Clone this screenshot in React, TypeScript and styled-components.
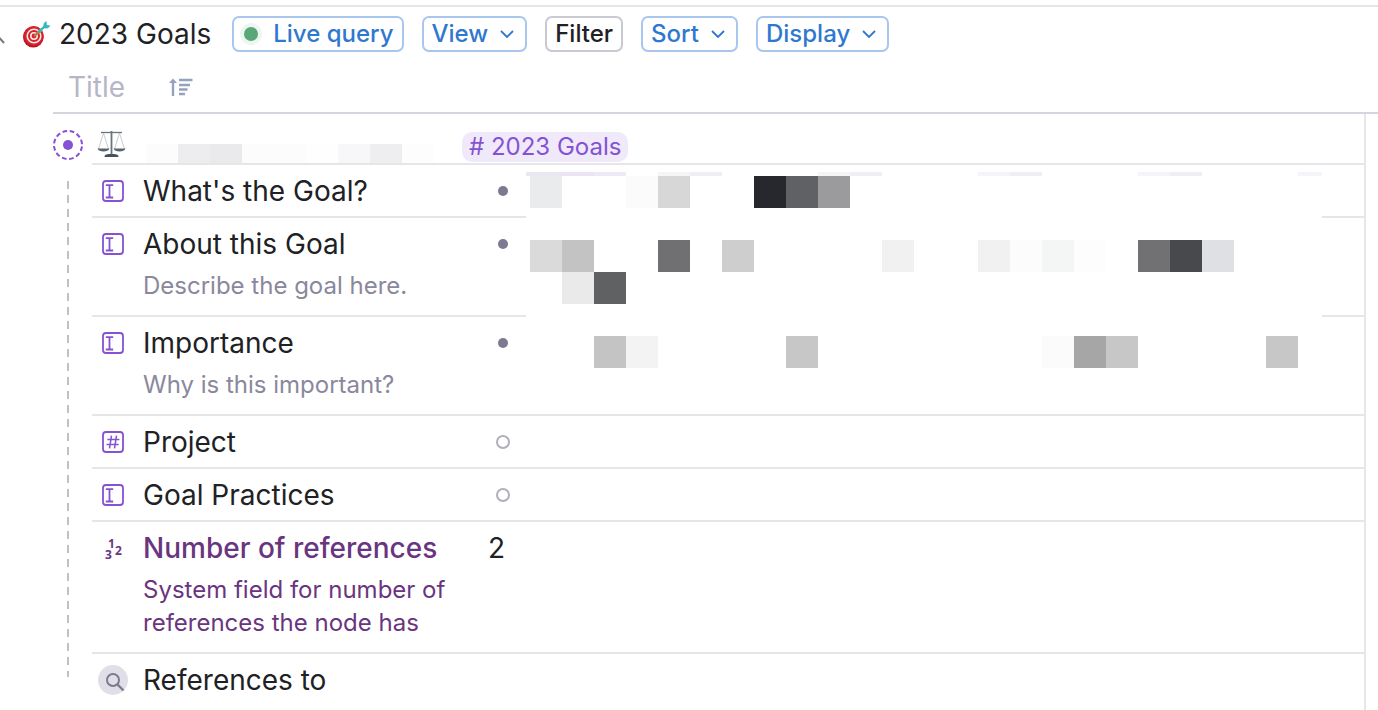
import React from "react";
import styled, { createGlobalStyle, css } from "styled-components";

const GlobalStyle = createGlobalStyle`
  * { box-sizing: border-box; }
  html, body, #root { height: 100%; }
  body {
    margin: 0;
    background: #fff;
    color: #202124;
    font-family: Inter, "Liberation Sans", sans-serif;
    overflow: hidden;
  }
`;

const Page = styled.main`
  min-height: 100%;
  display: flex;
  flex-direction: column;
  padding-top: 5px;
`;

const Toolbar = styled.header`
  display: flex;
  align-items: center;
  gap: 18px;
  height: 55px;
  border-top: 2px solid #e5e5e7;
`;

const Heading = styled.div`
  display: flex;
  align-items: center;
  margin-right: 3px;
`;

const BackEdge = styled.svg`
  width: 6px;
  height: 12px;
  margin: 12px 16px 0 0;
`;

const Target = styled.svg`
  width: 30px;
  height: 28px;
`;

const PageTitle = styled.h1`
  margin: 0 0 0 7px;
  font-size: 28px;
  line-height: 36px;
  font-weight: 400;
  white-space: nowrap;
`;

const ToolButton = styled.button<{ $plain?: boolean }>`
  display: flex;
  align-items: center;
  gap: 12px;
  height: 36px;
  padding: 0 8px;
  border: 2px solid ${(p) => (p.$plain ? "#c9c9d1" : "#a9c7ee")};
  border-radius: 7px;
  background: #fff;
  color: ${(p) => (p.$plain ? "#202124" : "#2f78cf")};
  font: 500 24px/32px Inter, "Liberation Sans", sans-serif;
  white-space: nowrap;
`;

const LiveDot = styled.span`
  width: 14px;
  height: 14px;
  margin: 0 3px 0 2px;
  border-radius: 50%;
  background: #5ba778;
  box-shadow: 0 0 0 4px #edf6f0;
`;

const ChevronIcon = styled.svg`
  width: 14px;
  height: 8px;
  margin-right: 3px;
`;

const ColumnHeader = styled.div`
  display: flex;
  align-items: center;
  gap: 44px;
  height: 54px;
  margin-left: 53px;
  padding: 2px 0 0 15px;
  border-bottom: 2px solid #d6d5de;
  color: #b7b6c6;
  font-size: 28px;
  line-height: 36px;
`;

const SortIcon = styled.svg`
  width: 24px;
  height: 20px;
`;

const Results = styled.section`
  flex: 1;
  display: flex;
  margin: 0 12px 0 53px;
  border-right: 2px solid #e7e7ea;
`;

const Gutter = styled.div`
  display: flex;
  flex-direction: column;
  align-items: center;
  gap: 21px;
  width: 30px;
  margin-right: 9px;
  padding-top: 16px;
`;

const NodeBullet = styled.svg`
  width: 30px;
  height: 30px;
`;

const Thread = styled.div`
  width: 2px;
  height: 496px;
  background: repeating-linear-gradient(#bfbfc4 0 8px, transparent 8px 14px);
`;

const Node = styled.article`
  position: relative;
  flex: 1;
  min-width: 0;
`;

const line = css`
  border-bottom: 2px solid #e6e6e8;
`;

const NodeHead = styled.div`
  display: grid;
  grid-template-columns: 54px 316px 1fr;
  align-items: end;
  height: 51px;
  ${line}
`;

const Scales = styled.svg`
  width: 30px;
  height: 30px;
  margin: 0 0 4px 5px;
`;

const Strip = styled.div`
  display: flex;
`;

const Tag = styled.a`
  justify-self: start;
  margin-bottom: 1px;
  padding: 0 7px;
  border-radius: 10px;
  background: #efe9fa;
  color: #8552d3;
  font-size: 24px;
  line-height: 30px;
  text-decoration: none;
  white-space: nowrap;
`;

const Field = styled.div<{ $last?: boolean }>`
  display: grid;
  grid-template-columns: 51px 338px 1fr;
  padding: 6px 0 5px;
  ${(p) => !p.$last && line}
`;

const IconCell = styled.div`
  display: flex;
  align-items: center;
  height: 40px;
  padding-left: 6px;
`;

const FieldIcon = styled.svg`
  width: 30px;
  height: 30px;
`;

const FieldName = styled.div<{ $system?: boolean }>`
  color: ${(p) => (p.$system ? "#6a3580" : "inherit")};
  font-size: 28px;
  font-weight: ${(p) => (p.$system ? 500 : 400)};
  line-height: 40px;
  white-space: nowrap;
`;

const Description = styled.p<{ $system?: boolean }>`
  margin: 5px 0 8px;
  color: ${(p) => (p.$system ? "#6a3580" : "#8a889c")};
  font-size: 24px;
  line-height: 33px;
`;

const Value = styled.div`
  display: flex;
  align-items: center;
  height: 40px;
  padding-left: 7px;
  font-size: 28px;
`;

const Dot = styled.span<{ $empty?: boolean }>`
  width: ${(p) => (p.$empty ? 14 : 10)}px;
  height: ${(p) => (p.$empty ? 14 : 10)}px;
  margin-left: ${(p) => (p.$empty ? 8 : 10)}px;
  border: ${(p) => (p.$empty ? "2px solid #b0afbb" : "0")};
  border-radius: 50%;
  background: ${(p) => (p.$empty ? "transparent" : "#7c7991")};
`;

const Mosaic = styled.div`
  position: absolute;
  top: 58px;
  left: 434px;
  right: 42px;
  height: 228px;
  display: grid;
  grid-template-columns: 4px repeat(24, 32px) 24px;
  grid-template-rows: 4px repeat(7, 32px);
  background: #fff;
  overflow: hidden;
`;

const Block = styled.span<{ $col: number; $row: number; $tone: string }>`
  grid-column: ${(p) => p.$col};
  grid-row: ${(p) => p.$row};
  background: ${(p) => p.$tone};
`;

const StripBlock = styled.span<{ $tone: string }>`
  width: 32px;
  height: 19px;
  background: ${(p) => p.$tone};
`;

const stripTones = ["#fcfcfd", "#ededf0", "#eaeaed", "#fcfcfd", "#fcfcfd", "#fefefe", "#f7f7f9", "#eeeef1", "#fdfdfe"];

const blocks: Array<[number, number, string]> = [
  [1, 1, "#e9e8f1"], [2, 1, "#e9e8f1"], [3, 1, "#ebe5f3"], [4, 1, "#edeaf5"],
  [6, 1, "#f5f5f8"], [7, 1, "#eeeef3"], [11, 1, "#f5f5f8"], [12, 1, "#f0f0f4"],
  [16, 1, "#f5f4f8"], [17, 1, "#efeef3"], [21, 1, "#f5f4f8"], [22, 1, "#efeef3"], [26, 1, "#f5f4f8"],
  [2, 2, "#eaebed"], [5, 2, "#fbfbfb"], [6, 2, "#d7d7d7"], [9, 2, "#27282d"], [10, 2, "#606164"], [11, 2, "#9b9b9d"],
  [2, 4, "#dadada"], [3, 4, "#c3c3c3"], [6, 4, "#707072"], [8, 4, "#cecece"], [13, 4, "#f1f1f1"],
  [16, 4, "#f1f1f1"], [17, 4, "#fcfcfc"], [18, 4, "#f4f6f5"], [19, 4, "#fdfdfd"],
  [21, 4, "#717173"], [22, 4, "#48494d"], [23, 4, "#dfe0e3"],
  [3, 5, "#eaeaea"], [4, 5, "#606163"],
  [4, 7, "#c4c4c4"], [5, 7, "#f3f3f3"], [10, 7, "#c7c7c7"],
  [18, 7, "#fbfbfb"], [19, 7, "#a6a6a6"], [20, 7, "#c7c7c7"], [25, 7, "#c7c7c7"],
];

type IconKind = "text" | "tag" | "count" | "search";

const Icon = ({ kind }: { kind: IconKind }) => (
  <FieldIcon viewBox="0 0 30 30" fill="none" aria-hidden="true">
    {(kind === "text" || kind === "tag") && (
      <rect x="5" y="5" width="20" height="20" rx="3" stroke="#8552d3" strokeWidth="1.8" />
    )}
    {kind === "text" && (
      <path d="M7.8 9.2h7.400M7.800 21.500h7.400M11.500 9.200v12.300" stroke="#8552d3" strokeWidth="1.800" />
    )}
    {kind === "tag" && (
      <path d="M13.500 8.700l-2 12.600M18.500 8.700l-2 12.600M9.400 12.600h12M8.600 17.400h12" stroke="#8552d3" strokeWidth="1.500" />
    )}
    {kind === "count" && (
      <text fill="#6a3580" fontFamily='"Noto Sans", sans-serif' fontSize="12" fontWeight="700">
        <tspan x="10" y="15">1</tspan>
        <tspan x="17" y="22">2</tspan>
        <tspan x="7" y="26">3</tspan>
      </text>
    )}
    {kind === "search" && (
      <>
        <circle cx="15" cy="15" r="15" fill="#e0dfe8" />
        <circle cx="15" cy="15" r="6" stroke="#7c7991" strokeWidth="2" />
        <path d="M19.500 19.500l6 6" stroke="#7c7991" strokeWidth="2.400" />
      </>
    )}
  </FieldIcon>
);

const Chevron = () => (
  <ChevronIcon viewBox="0 0 14 8" fill="none" aria-hidden="true">
    <path d="M1 1l6 6 6-6" stroke="currentColor" strokeWidth="1.800" />
  </ChevronIcon>
);

interface FieldData {
  icon: IconKind;
  name: string;
  description?: string;
  system?: boolean;
  value?: "filled" | "empty" | string;
}

const fields: FieldData[] = [
  { icon: "text", name: "What's the Goal?", value: "filled" },
  { icon: "text", name: "About this Goal", description: "Describe the goal here.", value: "filled" },
  { icon: "text", name: "Importance", description: "Why is this important?", value: "filled" },
  { icon: "tag", name: "Project", value: "empty" },
  { icon: "text", name: "Goal Practices", value: "empty" },
  { icon: "count", name: "Number of references", description: "System field for number of references the node has", system: true, value: "2" },
  { icon: "search", name: "References to" },
];

const FieldRow = ({ field, last }: { field: FieldData; last: boolean }) => (
  <Field $last={last}>
    <IconCell><Icon kind={field.icon} /></IconCell>
    <div>
      <FieldName $system={field.system}>{field.name}</FieldName>
      {field.description && <Description $system={field.system}>{field.description}</Description>}
    </div>
    <Value>
      {field.value === "filled" && <Dot />}
      {field.value === "empty" && <Dot $empty />}
      {field.value !== "filled" && field.value !== "empty" && field.value}
    </Value>
  </Field>
);

export default function App() {
  return (
    <Page>
      <GlobalStyle />
      <Toolbar>
        <Heading>
          <BackEdge viewBox="0 0 6 12" aria-hidden="true">
            <path d="M-4 0l8 9" stroke="#77777f" strokeWidth="2" />
          </BackEdge>
          <Target viewBox="0 0 30 28" aria-hidden="true">
            <ellipse cx="11.300" cy="17" rx="10.300" ry="10.500" fill="#b3121f" />
            <ellipse cx="11.800" cy="16" rx="10" ry="10" fill="#d9202c" />
            <circle cx="12" cy="16" r="6.800" fill="none" stroke="#fbe9e4" strokeWidth="1.600" />
            <circle cx="12" cy="16" r="3.200" fill="none" stroke="#fbe9e4" strokeWidth="1.600" />
            <path d="M12 16l8-6" stroke="#b5823c" strokeWidth="2.200" />
            <path d="M16 10.500l5-4 1-3.500 2.500-2 .3 4 3.700.500-2.500 2.700-4 .3-5 5z" fill="#35b9ba" />
          </Target>
          <PageTitle>2023 Goals</PageTitle>
        </Heading>
        <ToolButton type="button"><LiveDot />Live query</ToolButton>
        <ToolButton type="button">View<Chevron /></ToolButton>
        <ToolButton type="button" $plain>Filter</ToolButton>
        <ToolButton type="button">Sort<Chevron /></ToolButton>
        <ToolButton type="button">Display<Chevron /></ToolButton>
      </Toolbar>
      <ColumnHeader>
        Title
        <SortIcon viewBox="0 0 24 20" fill="none" aria-hidden="true">
          <path d="M4 19V3" stroke="#94a2c0" strokeWidth="2.400" />
          <path d="M0 6l4-4.500L8 6z" fill="#94a2c0" />
          <path d="M10 3h13.500M10 8h11M10 12.500h8.500M10 17h6" stroke="#94a2c0" strokeWidth="2.400" />
        </SortIcon>
      </ColumnHeader>
      <Results>
        <Gutter>
          <NodeBullet viewBox="0 0 30 30" aria-hidden="true">
            <circle cx="15" cy="15" r="14" fill="none" stroke="#8552d3" strokeWidth="2" strokeDasharray="4.600 2.730" strokeDashoffset="-1.400" />
            <circle cx="15" cy="15" r="5" fill="#8552d3" />
          </NodeBullet>
          <Thread />
        </Gutter>
        <Node>
          <NodeHead>
            <Scales viewBox="0 0 30 30" fill="none" aria-hidden="true">
              <path d="M4 3.500h21" stroke="#66747f" strokeWidth="1.300" />
              <path d="M14.500 2v24" stroke="#66747f" strokeWidth="1.800" />
              <path d="M6.500 4L1.500 20M6.500 4l5 16M22.500 4l-5 16M22.500 4l5 16" stroke="#b9c0c6" strokeWidth=".8" />
              <path d="M.5 19.500h12c-1 4-11 4-12 0zM16.500 19.500h12c-1 4-11 4-12 0z" fill="#566672" />
              <path d="M7.500 28c0-3 3-3 7-3s7 0 7 3z" fill="#44525d" />
            </Scales>
            <Strip>{stripTones.map((tone, i) => <StripBlock key={i} $tone={tone} />)}</Strip>
            <Tag href="#goals"># 2023 Goals</Tag>
          </NodeHead>
          {fields.map((field, i) => (
            <FieldRow key={field.name} field={field} last={i === fields.length - 1} />
          ))}
          <Mosaic>
            {blocks.map(([col, row, tone]) => (
              <Block key={`${col}-${row}`} $col={col} $row={row} $tone={tone} />
            ))}
          </Mosaic>
        </Node>
      </Results>
    </Page>
  );
}
